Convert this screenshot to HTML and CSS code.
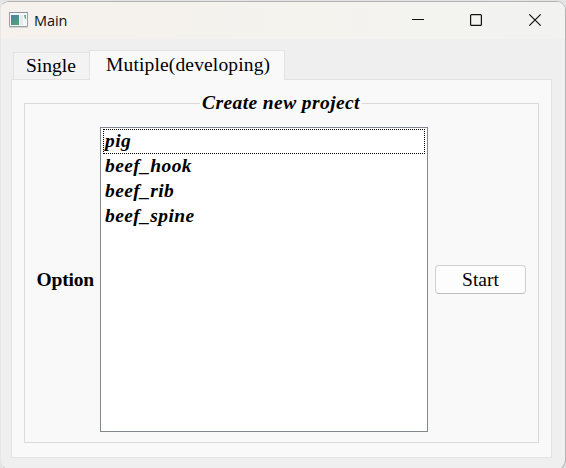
FILE: index.html
```html
<!DOCTYPE html>
<html lang="en">
<head>
<meta charset="utf-8">
<title>Main</title>
<link rel="stylesheet" href="styles.css">
</head>
<body>
<div class="window">
  <header class="titlebar">
    <svg class="app-icon" width="19" height="16" viewBox="0 0 19 16">
      <defs><linearGradient id="pic" x1="0" y1="0" x2="0.4" y2="1"><stop offset="0" stop-color="#4c7fa8"/><stop offset="1" stop-color="#50a078"/></linearGradient></defs>
      <path d="M.5.5h18v14H.5z" fill="#f5f7f8" stroke="#9a9fa8"/>
      <path d="M0 .5h19" stroke="#8b93a0"/>
      <path d="M2 3h8v10H2z" fill="url(#pic)"/>
      <path d="M11 3h3v10h-3z" fill="#e6eaec"/>
      <path d="M15 3h2v4h-1z" fill="#62a78c"/>
      <path d="M0 15.5h19" stroke="#d5d5d5"/>
    </svg>
    <span class="title">Main</span>
    <svg class="controls" width="130" height="14" viewBox="0 0 130 14" fill="none" stroke="#111">
      <path d="M0 6.5h12"/>
      <rect x="58.6" y="1.6" width="10.8" height="10.8" rx="1" stroke-width="1.2"/>
      <path d="M117.3 1.3l11.4 11.4M128.7 1.3l-11.4 11.4" stroke-width="1.2"/>
    </svg>
  </header>
  <main class="content">
    <nav class="tabs">
      <div class="tab">Single</div>
      <div class="tab active">Mutiple(developing)</div>
    </nav>
    <section class="pane">
      <fieldset class="group">
        <legend>Create new project</legend>
        <div class="row">
          <label class="option">Option</label>
          <ul class="list">
            <li class="focused">pig</li>
            <li>beef_hook</li>
            <li>beef_rib</li>
            <li>beef_spine</li>
          </ul>
          <button class="start">Start</button>
        </div>
      </fieldset>
    </section>
  </main>
</div>
</body>
</html>
```
FILE: styles.css
```css
* { box-sizing: border-box; }
body {
  margin: 0;
  width: 566px;
  height: 468px;
  overflow: hidden;
  background: #e4e4e4;
  font-family: "Liberation Serif", serif;
  font-size: 19.5px;
  color: #000;
}
.window {
  margin-top: 1px;
  width: 566px;
  height: 470px;
  border: 1px solid #b4b4b4;
  border-left-color: #e6e6e6;
  border-radius: 9px 9px 11px 11px;
  background: #efefef;
  overflow: hidden;
}
.titlebar {
  height: 37px;
  display: flex;
  align-items: center;
  padding: 0 23px 1px 8px;
  background: linear-gradient(90deg, #f6f1ed, #f4f3ee 55%, #f2f3f1);
}
.app-icon { margin-top: 0; }
.title {
  margin: 1px 0 0 6px;
  font: 14.5px/20px "Open Sans", sans-serif;
  letter-spacing: -0.1px;
  color: #111;
}
.controls { margin-left: auto; }
.content { padding: 11px 13px 0 10px; }
.tabs {
  display: flex;
  align-items: flex-end;
  height: 29px;
  padding-left: 2px;
}
.tab {
  width: 77px;
  height: 27px;
  padding-left: 12px;
  border: 1px solid #e3e3e3;
  border-width: 1px 0 0 1px;
  background: #f3f3f3;
  line-height: 26px;
  white-space: nowrap;
}
.tab.active {
  width: 196px;
  height: 30px;
  margin: 0 0 -1px -1px;
  padding-left: 16px;
  border-right-width: 1px;
  background: #f9f9f9;
  line-height: 28px;
  letter-spacing: 0.15px;
  z-index: 1;
}
.pane {
  width: 541px;
  height: 379px;
  padding: 12px;
  border: 1px solid #e3e3e3;
  background: #f9f9f9;
}
.group {
  width: 515px;
  height: 351px;
  margin: 0;
  padding: 13px 12px 9px 11px;
  border: 1px solid #dadada;
}
legend {
  height: 22px;
  margin: 0 auto;
  padding: 0 2px;
  font-weight: bold;
  font-style: italic;
  line-height: 22px;
  letter-spacing: 0.4px;
}
.row {
  display: flex;
  align-items: center;
  height: 305px;
}
.option {
  width: 64px;
  padding-left: 0.6px;
  font-weight: bold;
  letter-spacing: -0.2px;
}
.list {
  width: 328px;
  height: 305px;
  margin: 0 7px 0 0;
  padding: 1px 2px;
  border: 1px solid #828790;
  background: #fff;
  list-style: none;
  font-weight: bold;
  font-style: italic;
  letter-spacing: 0.4px;
}
.list li {
  height: 25px;
  padding-left: 2px;
  line-height: 24px;
}
.list .focused {
  padding-left: 1px;
  border: 1px dotted #000;
  line-height: 22px;
}
.start {
  width: 91px;
  height: 29px;
  padding: 0;
  border: 1px solid #d0d0d0;
  border-bottom-color: #bdbdbd;
  border-radius: 4px;
  background: #fdfdfd;
  color: #000;
  font: inherit;
}
```
